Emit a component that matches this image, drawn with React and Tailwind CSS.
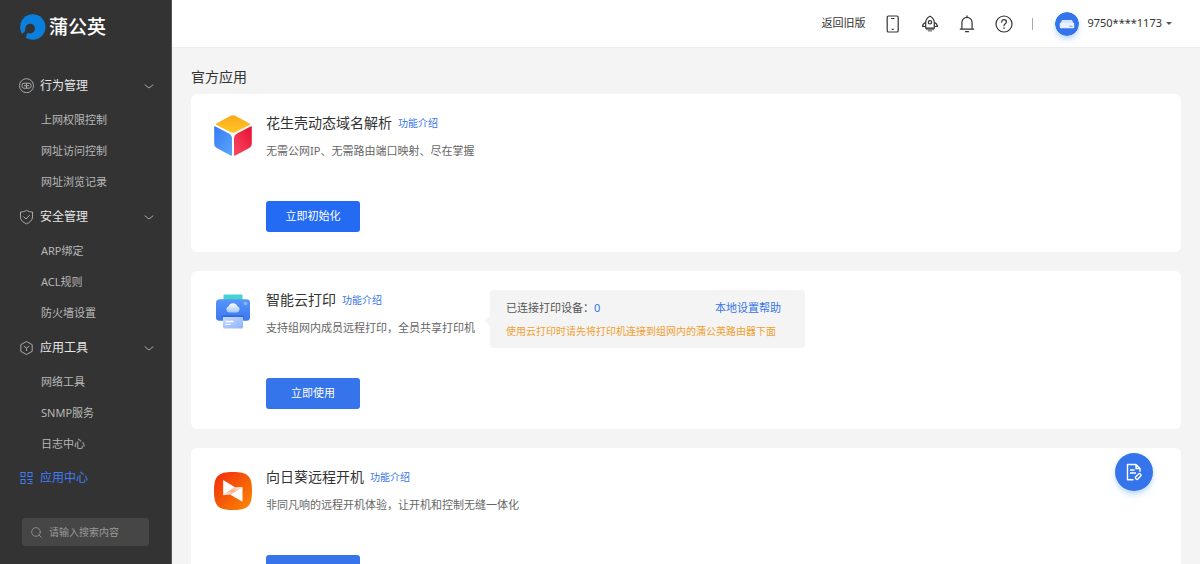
import { Search } from 'lucide-react'

const menu = [
  { title: '行为管理', icon: BehaviorIcon, items: ['上网权限控制', '网址访问控制', '网址浏览记录'] },
  { title: '安全管理', icon: ShieldIcon, items: ['ARP绑定', 'ACL规则', '防火墙设置'] },
  { title: '应用工具', icon: ToolIcon, items: ['网络工具', 'SNMP服务', '日志中心'] },
]

const apps = [
  {
    name: '花生壳动态域名解析',
    desc: '无需公网IP、无需路由端口映射、尽在掌握',
    action: '立即初始化',
    button: 'bg-[#246bf3]',
    icon: CubeLogo,
  },
  {
    name: '智能云打印',
    desc: '支持组网内成员远程打印，全员共享打印机',
    action: '立即使用',
    button: 'bg-[#3574eb]',
    icon: PrinterLogo,
    printer: true,
  },
  {
    name: '向日葵远程开机',
    desc: '非同凡响的远程开机体验，让开机和控制无缝一体化',
    action: '立即使用',
    button: 'bg-[#3574eb]',
    icon: SunLogo,
  },
]

function BrandLogo() {
  return (
    <svg viewBox="0 0 26 26" className="size-[26px]">
      <circle cx="12.800" cy="13" r="12.700" fill="#0b7fdc" />
      <circle cx="10.200" cy="14.600" r="4.800" fill="#333" />
      <path d="M5.400 14C5.600 17 4.600 18.400 1.800 20L4 24.500l2.300-1.300C6 21 6.800 19.600 8.500 18.800z" fill="#333" />
    </svg>
  )
}

function BehaviorIcon() {
  return (
    <svg viewBox="0 0 16 16" className="size-4" fill="none" stroke="currentColor">
      <circle cx="7.500" cy="7.700" r="7" />
      <rect x="3" y="5.200" width="9" height="5" rx="2" />
      <path d="M7.500 5.200v5M5 7.700h5" />
    </svg>
  )
}

function ShieldIcon() {
  return (
    <svg viewBox="0 0 16 16" className="size-4" fill="none" stroke="currentColor" strokeLinejoin="round">
      <path d="M7.500 1.300C5.700 2.500 3.700 3 1.500 3v5c0 3.200 2.500 5.300 6 6.800 3.500-1.500 6-3.600 6-6.800V3c-2.200 0-4.200-.5-6-1.700z" />
      <path d="M4.500 7.500L7 10l3.800-4" />
    </svg>
  )
}

function ToolIcon() {
  return (
    <svg viewBox="0 0 16 16" className="size-4" fill="none" stroke="currentColor" strokeLinejoin="round">
      <path d="M7.500 1.500l5.700 3.200v6.600l-5.700 3.200-5.700-3.200V4.700z" />
      <path d="M4.800 6.200L7.500 8l2.700-1.800M7.500 8v3" />
    </svg>
  )
}

function AppsIcon() {
  return (
    <svg viewBox="0 0 16 16" className="size-4" fill="none" stroke="currentColor">
      <rect x="2" y="2.500" width="4" height="4" />
      <rect x="9" y="2.500" width="4" height="4" />
      <rect x="2" y="9.500" width="4" height="4" />
      <path d="M8.500 9.500h5M10.500 11.500h3M8.500 13.500h5" />
    </svg>
  )
}

function ArrowDown() {
  return (
    <svg viewBox="0 0 10 8" className="h-2 w-2.5" fill="none" stroke="currentColor">
      <path d="M.7 2.600L5 6l4.300-3.400" />
    </svg>
  )
}

function PhoneIcon() {
  return (
    <svg viewBox="0 0 18 18" className="size-[18px]" fill="none" stroke="currentColor" strokeWidth="1.200">
      <rect x="3.200" y="1" width="11" height="16" rx="1.300" />
      <path d="M7 3.500h3.500M7.700 14.300h2" />
    </svg>
  )
}

function RocketIcon() {
  return (
    <svg viewBox="0 0 18 18" className="size-[18px]" fill="none" stroke="currentColor" strokeWidth="1.200" strokeLinejoin="round">
      <path d="M9 1.200C6 2.700 4.700 4.800 4.700 7.600v5.600h8.600V7.600C13.300 4.800 12 2.700 9 1.200z" />
      <circle cx="9" cy="7.300" r="1.700" />
      <path d="M4.700 7.500C2.600 8.300 1.600 9.600 1.600 11.500h3.100M13.300 7.500c2.100.8 3.100 2.100 3.100 4h-3.100M6 13.200v2M8 13.200v3.300M10 13.200v3.300M12 13.200v2" />
    </svg>
  )
}

function BellIcon() {
  return (
    <svg viewBox="0 0 18 18" className="size-[18px]" fill="none" stroke="currentColor" strokeWidth="1.200" strokeLinecap="round">
      <path d="M9 .8v1.500M2.300 14.200h13.400M3.900 14V7.500C3.900 4.600 6.200 2.400 9 2.400s5.100 2.200 5.100 5.100V14M7.500 16.700h3" />
    </svg>
  )
}

function HelpIcon() {
  return (
    <svg viewBox="0 0 18 18" className="size-[18px]" fill="none" stroke="currentColor" strokeWidth="1.200" strokeLinecap="round">
      <circle cx="9" cy="9" r="8" />
      <path d="M6.600 7.200c0-1.500 1-2.500 2.400-2.500s2.400.9 2.400 2.200c0 1.800-2.400 1.900-2.400 3.800" />
      <path d="M9 13v.2" strokeWidth="1.500" />
    </svg>
  )
}

function NoteIcon() {
  return (
    <svg viewBox="0 0 18 18" className="size-[18px]" fill="none" stroke="currentColor" strokeWidth="1.400" strokeLinejoin="round">
      <path d="M8.500 16.800H2.500V1.500H11l4 4v3.200M11 1.500v4h4M5 7h4.500M5 10h6" />
      <rect x="10" y="12" width="6.500" height="3" rx="1.200" transform="rotate(-45 13.200 13.500)" />
    </svg>
  )
}

function CubeLogo() {
  return (
    <svg viewBox="0 0 38 42" className="h-[42px] w-[38px]">
      <defs>
        <linearGradient id="cubeTop" x1="0" y1="0" x2="0" y2="1">
          <stop offset="0" stopColor="#fba816" />
          <stop offset="1" stopColor="#ffc72a" />
        </linearGradient>
        <linearGradient id="cubeLeft" x1="0" y1="0" x2="1" y2="1">
          <stop offset="0" stopColor="#3778f4" />
          <stop offset="1" stopColor="#5aa8fb" />
        </linearGradient>
        <linearGradient id="cubeRight" x1="1" y1="0" x2="0" y2="1">
          <stop offset="0" stopColor="#e60f35" />
          <stop offset="1" stopColor="#fb4a61" />
        </linearGradient>
      </defs>
      <path d="M17.200 .6q1.800-.8 3.600 0l14.800 7.800q1.200.8 0 1.500L20.800 17.400q-1.800.9-3.600 0L2.400 9.900q-1.200-.7 0-1.500z" fill="url(#cubeTop)" />
      <path d="M.2 12.300q0-1.500 1.300-.9L14.500 18.200q3.500 1.800 3.500 5.500v16q0 1.700-1.400.9L2.300 32.700Q.2 31.300.2 28.700z" fill="url(#cubeLeft)" />
      <path d="M37.800 12.300q0-1.500-1.300-.9L23.500 18.200q-3.500 1.800-3.500 5.500v16q0 1.700 1.400.9L35.700 32.700q2.100-1.400 2.100-4z" fill="url(#cubeRight)" />
    </svg>
  )
}

function PrinterLogo() {
  return (
    <svg viewBox="0 0 38 42" className="h-[42px] w-[38px]">
      <defs>
        <linearGradient id="printerBody" x1="0" y1="0" x2="0" y2="1">
          <stop offset="0" stopColor="#5796fb" />
          <stop offset="1" stopColor="#3b77ef" />
        </linearGradient>
        <linearGradient id="printerPaper" x1="0" y1="0" x2="1" y2="1">
          <stop offset="0" stopColor="#c5dafe" />
          <stop offset="1" stopColor="#8eb4fb" />
        </linearGradient>
        <linearGradient id="printerCloud" x1="0" y1="0" x2="0" y2="1">
          <stop offset="0" stopColor="#fff" />
          <stop offset="1" stopColor="#a3c4fd" />
        </linearGradient>
      </defs>
      <path d="M9.500 3.500q0-1 1-1h17q1 0 1 1v6h-19z" fill="#45d3cf" />
      <rect x="2" y="7.300" width="34" height="21.500" rx="3.500" fill="url(#printerBody)" />
      <rect x="8" y="23.500" width="22" height="2.500" rx="1" fill="#2e68da" />
      <path d="M9 25h20v10q0 1.500-1.500 1.500h-17Q9 36.500 9 35z" fill="url(#printerPaper)" />
      <path d="M15.200 20.500a3.200 3.200 0 0 1-.6-6.200 4.700 4.700 0 0 1 8.800 0 3.200 3.200 0 0 1-.4 6.200z" fill="url(#printerCloud)" />
      <circle cx="31.500" cy="11.500" r="1.800" fill="#8bb6ff" />
      <path d="M11.500 29.500h8M11.500 32.300h5" stroke="#fff" strokeWidth="1.300" />
    </svg>
  )
}

function SunLogo() {
  return (
    <svg viewBox="0 0 38 42" className="h-[42px] w-[38px]">
      <defs>
        <linearGradient id="sunBg" x1="0" y1="0" x2="1" y2="1">
          <stop offset="0" stopColor="#f02a0e" />
          <stop offset="1" stopColor="#fb8a00" />
        </linearGradient>
        <linearGradient id="sunBand" x1="0" y1="1" x2="1" y2="0">
          <stop offset="0" stopColor="#fff" />
          <stop offset=".5" stopColor="#ffad94" />
          <stop offset="1" stopColor="#fff" />
        </linearGradient>
      </defs>
      <path d="M19 3c15 0 19 4 19 19s-4 19-19 19S0 37 0 22 4 3 19 3z" fill="url(#sunBg)" />
      <path d="M9.200 11L21 18.300 9.200 26.300zM28.500 18v14.700L16 25.500z" fill="#fff" />
      <path d="M9.200 26.300L21 18.300l7.500-.3L16 25.500z" fill="url(#sunBand)" />
    </svg>
  )
}

function AvatarIcon() {
  return (
    <svg viewBox="0 0 24 24" className="size-6 rounded-full shadow-md shadow-blue-200">
      <circle cx="12" cy="12" r="12" fill="#3574eb" />
      <path d="M7 8h10l2 4.500H5z" fill="#d3e2ff" />
      <rect x="4.800" y="10.800" width="14.400" height="5.400" rx="1" fill="#e9f1ff" />
      <path d="M14.500 14.200h3" stroke="#6d9bf3" />
    </svg>
  )
}

function Sidebar() {
  return (
    <aside className="w-43 shrink-0 bg-[#333] border-r border-[#555]">
      <a href="#home" className="flex items-center gap-[3px] h-[54px] pl-5 text-white text-[19px] font-medium">
        <BrandLogo />
        蒲公英
      </a>
      <nav className="mt-[13px]">
        {menu.map(({ title, icon: Icon, items }) => (
          <div key={title}>
            <button className="flex items-center w-full h-[38px] pl-[19px] pr-[17px] text-xs text-[#e6e6e6]">
              <span className="text-[#a8a8a8]"><Icon /></span>
              <span className="ml-[5px] mr-auto">{title}</span>
              <span className="text-[#a8a8a8]"><ArrowDown /></span>
            </button>
            {items.map(item => (
              <a key={item} href="#menu" className="flex items-center h-[31px] pl-[41px] text-[11px] text-[#b8b8b8]">
                {item}
              </a>
            ))}
          </div>
        ))}
        <a href="#apps" className="flex items-center gap-[5px] h-9 pl-[19px] text-xs text-[#3f7df6]">
          <AppsIcon />
          应用中心
        </a>
      </nav>
      <label className="flex items-center gap-1.5 h-7 mt-[22px] mx-[22px] px-2 rounded-[3px] bg-[#464646] text-[#999]">
        <Search size={13} strokeWidth={1.5} className="shrink-0" />
        <input
          aria-label="搜索"
          placeholder="请输入搜索内容"
          className="w-full min-w-0 text-[10px] text-white placeholder:text-[#999] outline-none"
        />
      </label>
    </aside>
  )
}

function TopBar() {
  return (
    <header className="flex items-center justify-end h-12 shrink-0 pr-7 bg-white text-[#333] border-b border-[#ededed]">
      <div className="flex items-center gap-[19px]">
        <a href="#old" className="text-[11px]">返回旧版</a>
        <button aria-label="手机"><PhoneIcon /></button>
        <button aria-label="升级"><RocketIcon /></button>
        <button aria-label="消息"><BellIcon /></button>
        <button aria-label="帮助"><HelpIcon /></button>
        <span className="w-px h-3 bg-[#aaa]" />
      </div>
      <button className="flex items-center ml-[22px] text-[11px]">
        <AvatarIcon />
        <span className="ml-2">9750****1173</span>
        <span className="ml-1 border-x-3 border-t-3 border-x-transparent border-t-[#555]" />
      </button>
    </header>
  )
}

function PrinterTip() {
  return (
    <div className="relative self-start w-[315px] ml-[15px] mt-px pt-[9px] pb-2 pl-4 pr-6 rounded-[3px] bg-[#f4f4f4]">
      <span className="absolute -left-[5px] top-[26px] border-y-5 border-r-5 border-y-transparent border-r-[#f4f4f4]" />
      <div className="flex justify-between text-[11px] leading-[18px] text-[#555]">
        <span>已连接打印设备：<span className="text-[#3574eb]">0</span></span>
        <a href="#help" className="text-[#3574eb]">本地设置帮助</a>
      </div>
      <p className="mt-[5px] text-[10px] leading-[18px] text-[#f0a030] whitespace-nowrap">
        使用云打印时请先将打印机连接到组网内的蒲公英路由器下面
      </p>
    </div>
  )
}

function AppCard({ app }) {
  const Icon = app.icon
  return (
    <section className="flex pt-[18px] pb-5 pl-[23px] pr-6 rounded-md bg-white">
      <div className="shrink-0 mt-[3px] mr-3.5"><Icon /></div>
      <div>
        <h2 className="flex items-center gap-1.5 text-sm leading-[22px] text-[#333]">
          {app.name}
          <a href="#intro" className="text-[10px] text-[#3574eb]">功能介绍</a>
        </h2>
        <p className="mt-2 text-[11px] leading-[18px] text-[#666]">{app.desc}</p>
        <button className={`mt-[41px] w-[94px] h-[31px] rounded-[3px] text-[11px] text-white ${app.button}`}>
          {app.action}
        </button>
      </div>
      {app.printer && <PrinterTip />}
    </section>
  )
}

export default function App() {
  return (
    <div className="relative flex h-screen overflow-hidden bg-[#f4f4f4] font-['Noto_Sans','Noto_Sans_CJK_SC',sans-serif]">
      <Sidebar />
      <div className="flex flex-col flex-1 min-w-0">
        <TopBar />
        <main className="flex-1 min-h-0 overflow-y-auto [scrollbar-width:none] pt-[19px] pb-5 px-[19px]">
          <h1 className="text-sm text-[#333]">官方应用</h1>
          <div className="flex flex-col gap-[19px] mt-[7px]">
            {apps.map(app => <AppCard key={app.name} app={app} />)}
          </div>
        </main>
      </div>
      <button
        aria-label="反馈"
        className="absolute right-[47px] bottom-[73px] flex items-center justify-center size-[38px] rounded-full bg-[#3574eb] text-white shadow-md shadow-blue-200">
        <NoteIcon />
      </button>
    </div>
  )
}
